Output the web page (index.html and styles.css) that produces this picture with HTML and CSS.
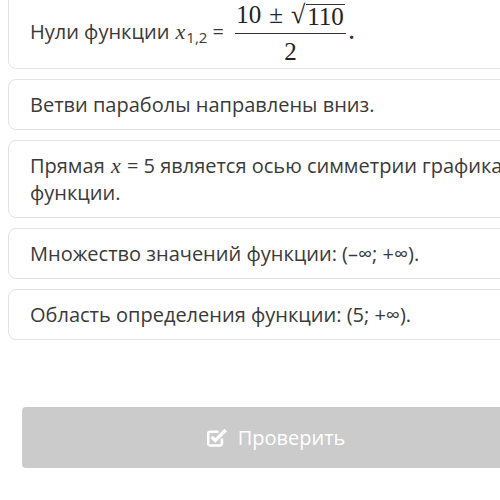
FILE: index.html
```html
<!DOCTYPE html>
<html lang="ru">

<head>
	<meta charset="UTF-8">
	<title>Проверка</title>
	<link rel="stylesheet" href="styles.css">
</head>

<body>
	<div class="page">
		<div class="options">
			<div class="option option-first">
				Нули функции <span class="mvar">x</span><sub>1,2</sub> =
				<span class="frac">
					<span class="num">10<span class="pm">±</span><span class="sqrt"><span class="radic">√</span><span class="radicand">110</span></span></span>
					<span class="den">2</span>
				</span><span class="dot">.</span>
			</div>
			<div class="option">Ветви параболы направлены вниз.</div>
			<div class="option">Прямая <span class="mvar">x</span> = 5 является осью симметрии графика функции.</div>
			<div class="option">Множество значений функции: (–∞; +∞).</div>
			<div class="option">Область определения функции: (5; +∞).</div>
		</div>

		<button class="check-btn" type="button">
			<svg class="check-icon" viewBox="0 0 20 18" width="21" height="19">
				<path d="M14.2 10 V14.8 a1.8 1.8 0 0 1 -1.8 1.8 H3 a1.8 1.8 0 0 1 -1.8 -1.8 V5.4 a1.8 1.8 0 0 1 1.8 -1.8 H11" fill="none" stroke="#fff" stroke-width="2.4" />
				<path d="M4.4 8.4 L7.8 11.8 L17.8 1.8" fill="none" stroke="#fff" stroke-width="3.2" />
			</svg>
			Проверить
		</button>
	</div>
</body>

</html>
```

FILE: styles.css
```css
body {
	margin: 0;
	background-color: #fff;
	font-family: 'Open Sans', 'Noto Sans', sans-serif;
	color: #3a3a3a;
	overflow: hidden;
}

.page {
	width: 536px;
	padding: 0 8px;
}

.options {
	display: flex;
	flex-direction: column;
	gap: 10px;
	margin-top: -12px;
}

.option {
	border: 1px solid #e3e3e3;
	border-radius: 8px;
	padding: 11px 21px;
	font-size: 20px;
	line-height: 27px;
	background-color: #fff;
}

.option-first {
	padding-top: 12px;
	padding-bottom: 2px;
}

.mvar {
	font-family: 'Liberation Serif', serif;
	font-style: italic;
	font-size: 22px;
	line-height: 20px;
	margin: 0 1px;
}

sub {
	font-size: 15px;
	vertical-align: -4px;
	line-height: 0;
}

.frac {
	display: inline-flex;
	flex-direction: column;
	align-items: center;
	vertical-align: middle;
	font-family: 'Liberation Serif', serif;
	font-size: 25px;
	color: #222;
	margin-left: 6px;
}

.num {
	line-height: 27px;
	padding: 0 1px 5px;
	border-bottom: 1.5px solid #333;
}

.pm {
	margin: 0 8px;
}

.den {
	line-height: 27px;
	padding: 4px 0 1px;
}

.sqrt {
	display: inline-flex;
	align-items: flex-end;
}

.radic {
	font-size: 26px;
	margin-right: 1px;
}

.radicand {
	border-top: 1.5px solid #333;
	line-height: 23px;
	padding: 0 1px;
}

.dot {
	margin-left: 3px;
	font-weight: bold;
}

.check-btn {
	display: flex;
	align-items: center;
	justify-content: center;
	gap: 10px;
	width: 508px;
	height: 61px;
	margin: 67px 0 0 14px;
	border: none;
	border-radius: 4px;
	background-color: #cbcbcb;
	color: #fff;
	font-family: 'Open Sans', 'Noto Sans', sans-serif;
	font-size: 20px;
}

.check-icon {
	display: block;
	flex-shrink: 0;
}
```
